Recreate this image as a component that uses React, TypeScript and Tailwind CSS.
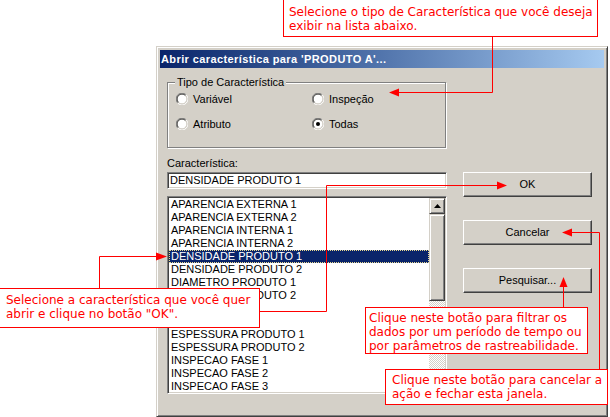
import React from 'react';

const ITEMS = [
  'APARENCIA EXTERNA 1',
  'APARENCIA EXTERNA 2',
  'APARENCIA INTERNA 1',
  'APARENCIA INTERNA 2',
  'DENSIDADE PRODUTO 1',
  'DENSIDADE PRODUTO 2',
  'DIAMETRO PRODUTO 1',
  'DIAMETRO PRODUTO 2',
  'DUREZA 1',
  'DUREZA 2',
  'ESPESSURA PRODUTO 1',
  'ESPESSURA PRODUTO 2',
  'INSPECAO FASE 1',
  'INSPECAO FASE 2',
  'INSPECAO FASE 3',
];

function Radio({ label, checked = false }: { label: string; checked?: boolean }) {
  return (
    <div className="flex h-[14px] items-center gap-[5px]">
      <svg width="12" height="12" viewBox="0 0 12 12" className="shrink-0">
        <circle cx="6" cy="6" r="4.5" fill="#fff" />
        <path d="M10.2 1.8 A5.9 5.9 0 0 0 1.8 10.2" fill="none" stroke="#808080" strokeWidth="1" />
        <path d="M1.8 10.2 A5.9 5.9 0 0 0 10.2 1.8" fill="none" stroke="#fff" strokeWidth="1" />
        <path d="M9.5 2.5 A4.9 4.9 0 0 0 2.5 9.5" fill="none" stroke="#404040" strokeWidth="1" />
        <path d="M2.5 9.5 A4.9 4.9 0 0 0 9.5 2.5" fill="none" stroke="#d4d0c8" strokeWidth="1" />
        {checked && <circle cx="6" cy="6" r="2" fill="#000" />}
      </svg>
      <span>{label}</span>
    </div>
  );
}

function Button({ children }: { children: React.ReactNode }) {
  return (
    <button className="flex h-[25px] w-[129px] items-center justify-center border border-t-white border-l-white border-b-[#404040] border-r-[#404040] bg-[#d4d0c8] text-black shadow-[inset_-1px_-1px_0_#808080]">
      {children}
    </button>
  );
}

function Callout({ className, lines }: { className: string; lines: string[] }) {
  return (
    <div className={`absolute border border-[#ff0000] bg-white font-['DejaVu_Sans',Verdana,sans-serif] text-[12px] leading-[14px] text-[#ff0000] whitespace-nowrap ${className}`}>
      {lines.map((l) => (
        <div key={l}>{l}</div>
      ))}
    </div>
  );
}

export default function App() {
  return (
    <div className="relative h-[417px] w-[610px] overflow-hidden bg-white font-['Liberation_Sans',Arial,sans-serif] text-[11px] leading-[13px] text-black">
      {/* dialog */}
      <div className="ml-[156px] mt-[46px] flex h-[371px] w-[452px] flex-col border border-t-[#d4d0c8] border-l-[#d4d0c8] border-b-[#404040] border-r-[#404040] bg-[#d4d0c8] p-[3px] shadow-[inset_1px_1px_0_#fff,inset_-1px_-1px_0_#808080]">
        <div className="flex h-[18px] items-center bg-gradient-to-r from-[#0a246a] to-[#a6caf0] pl-[1px] text-[11px] font-bold tracking-[0.4px] text-white">
          Abrir característica para 'PRODUTO A'...
        </div>

        <div className="flex gap-[16px] pl-[7px]">
          {/* left column */}
          <div className="flex w-[280px] flex-col">
            <div className="relative mt-[14px] h-[66px] w-[279px] border border-[#808080] shadow-[inset_1px_1px_0_#fff,1px_1px_0_#fff]">
              <span className="absolute left-[7px] top-[-7px] bg-[#d4d0c8] px-[2px]">Tipo de Característica</span>
              <div className="grid grid-cols-[136px_1fr] gap-y-[11px] pl-[8px] pt-[9px]">
                <Radio label="Variável" />
                <Radio label="Inspeção" />
                <Radio label="Atributo" />
                <Radio label="Todas" checked />
              </div>
            </div>

            <div className="mt-[9px]">Característica:</div>
            <div className="mt-[2px] flex h-[17px] items-center border border-t-[#808080] border-l-[#808080] border-b-white border-r-white bg-white pl-[2px] shadow-[inset_1px_1px_0_#404040,inset_-1px_-1px_0_#d4d0c8]">
              DENSIDADE PRODUTO 1
            </div>

            {/* list */}
            <div className="mt-[7px] flex h-[198px] border border-t-[#808080] border-l-[#808080] border-b-white border-r-white bg-white p-[1px] shadow-[inset_1px_1px_0_#404040,inset_-1px_-1px_0_#d4d0c8]">
              <div className="flex-1 overflow-hidden">
                {ITEMS.map((it, i) =>
                  i === 4 ? (
                    <div key={it} className="h-[13px] border border-dotted border-[#e8d890] bg-[#0a246a] pl-[1px] text-white leading-[11px]">
                      {it}
                    </div>
                  ) : (
                    <div key={it} className="h-[13px] pl-[2px]">
                      {it}
                    </div>
                  ),
                )}
              </div>
              {/* scrollbar */}
              <div className="flex w-[16px] flex-col">
                <div className="flex h-[16px] items-center justify-center border border-t-[#d4d0c8] border-l-[#d4d0c8] border-b-[#404040] border-r-[#404040] bg-[#d4d0c8] shadow-[inset_1px_1px_0_#fff,inset_-1px_-1px_0_#808080]">
                  <svg width="7" height="4" viewBox="0 0 7 4">
                    <path d="M3.5 0 L7 4 L0 4 Z" fill="#000" />
                  </svg>
                </div>
                <div className="h-[87px] border border-t-[#d4d0c8] border-l-[#d4d0c8] border-b-[#404040] border-r-[#404040] bg-[#d4d0c8] shadow-[inset_1px_1px_0_#fff,inset_-1px_-1px_0_#808080]" />
                <div className="flex-1 bg-[image:repeating-conic-gradient(#fff_0%_25%,#d4d0c8_0%_50%)] bg-[length:2px_2px]" />
                <div className="flex h-[16px] items-center justify-center border border-t-[#d4d0c8] border-l-[#d4d0c8] border-b-[#404040] border-r-[#404040] bg-[#d4d0c8] shadow-[inset_1px_1px_0_#fff,inset_-1px_-1px_0_#808080]">
                  <svg width="7" height="4" viewBox="0 0 7 4">
                    <path d="M0 0 L7 0 L3.5 4 Z" fill="#000" />
                  </svg>
                </div>
              </div>
            </div>
          </div>

          {/* buttons */}
          <div className="mt-[104px] flex flex-col gap-[23px]">
            <Button>OK</Button>
            <Button>Cancelar</Button>
            <Button>Pesquisar...</Button>
          </div>
        </div>
      </div>

      {/* leader lines */}
      <svg className="pointer-events-none absolute inset-0" width="610" height="417" viewBox="0 0 610 417">
        <g fill="none" stroke="#ff0000" strokeWidth="1">
          <polyline points="492.5,36 492.5,92.5 398,92.5" />
          <polyline points="99.5,288 99.5,256.5 157,256.5" />
          <polyline points="259,311.5 326.5,311.5 326.5,185.5 497,185.5" />
          <polyline points="599.5,369 599.5,232.5 572,232.5" />
          <polyline points="563.5,307 563.5,286" />
        </g>
        <g fill="#ff0000">
          <polygon points="389,92.5 399,88.5 399,96.5" />
          <polygon points="167,256.5 156,252.5 156,260.5" />
          <polygon points="507,185.5 497,181.5 497,189.5" />
          <polygon points="562,232.5 572,228.5 572,236.5" />
          <polygon points="563.5,277 559.5,287 567.5,287" />
        </g>
      </svg>

      <Callout
        className="left-[283px] top-[-1px] h-[38px] w-[315px] pl-[5px] pt-[5px]"
        lines={['Selecione o tipo de Característica que você deseja', 'exibir na lista abaixo.']}
      />
      <Callout
        className="left-[-1px] top-[288px] h-[40px] w-[261px] pl-[6px] pt-[4px]"
        lines={['Selecione a característica que você quer', 'abrir e clique no botão "OK".']}
      />
      <Callout
        className="left-[365px] top-[307px] h-[47px] w-[223px] pl-[3px] pt-[3px]"
        lines={['Clique neste botão para filtrar os', 'dados por um período de tempo ou', 'por parâmetros de rastreabilidade.']}
      />
      <Callout
        className="left-[385px] top-[369px] h-[36px] w-[223px] pl-[6px] pt-[3px]"
        lines={['Clique neste botão para cancelar a', 'ação e fechar esta janela.']}
      />
    </div>
  );
}
